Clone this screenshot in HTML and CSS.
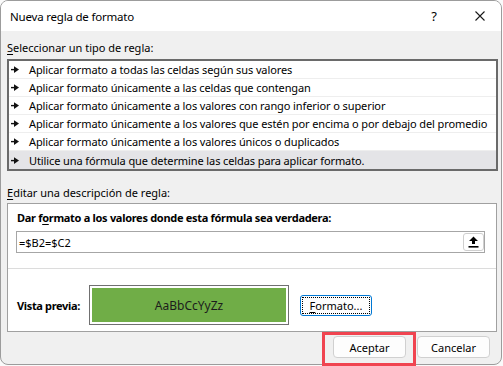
FILE: index.html
```html
<!DOCTYPE html>
<html lang="es">
<head>
  <meta charset="UTF-8" />
  <meta name="viewport" content="width=device-width, initial-scale=1.0"/>
  <title>Nueva regla de formato</title>
  <link rel="stylesheet" href="styles.css">
</head>
<body>
  <div class="dialog">
    <div class="titlebar">
      <span class="title">Nueva regla de formato</span>
      <span class="help">?</span>
      <span class="close">
        <svg width="10" height="10" viewBox="0 0 10 10"><path d="M0.5 0.5 L9.5 9.5 M9.5 0.5 L0.5 9.5" stroke="#1a1a1a" stroke-width="1.1" fill="none"/></svg>
      </span>
    </div>

    <div class="content">
      <div class="label"><u>S</u>eleccionar un tipo de regla:</div>
      <ul class="rule-list">
        <li><svg class="arrow" width="8" height="7" viewBox="0 0 8 7"><rect x="0" y="2.9" width="4" height="1.4"/><path d="M3 0.3 L8 3.6 L3 6.9 Z"/></svg>Aplicar formato a todas las celdas según sus valores</li>
        <li><svg class="arrow" width="8" height="7" viewBox="0 0 8 7"><rect x="0" y="2.9" width="4" height="1.4"/><path d="M3 0.3 L8 3.6 L3 6.9 Z"/></svg>Aplicar formato únicamente a las celdas que contengan</li>
        <li><svg class="arrow" width="8" height="7" viewBox="0 0 8 7"><rect x="0" y="2.9" width="4" height="1.4"/><path d="M3 0.3 L8 3.6 L3 6.9 Z"/></svg>Aplicar formato únicamente a los valores con rango inferior o superior</li>
        <li><svg class="arrow" width="8" height="7" viewBox="0 0 8 7"><rect x="0" y="2.9" width="4" height="1.4"/><path d="M3 0.3 L8 3.6 L3 6.9 Z"/></svg>Aplicar formato únicamente a los valores que estén por encima o por debajo del promedio</li>
        <li><svg class="arrow" width="8" height="7" viewBox="0 0 8 7"><rect x="0" y="2.9" width="4" height="1.4"/><path d="M3 0.3 L8 3.6 L3 6.9 Z"/></svg>Aplicar formato únicamente a los valores únicos o duplicados</li>
        <li class="selected"><svg class="arrow" width="8" height="7" viewBox="0 0 8 7"><rect x="0" y="2.9" width="4" height="1.4"/><path d="M3 0.3 L8 3.6 L3 6.9 Z"/></svg>Utilice una fórmula que determine las celdas para aplicar formato.</li>
      </ul>

      <div class="label label-edit"><u>E</u>ditar una descripción de regla:</div>
      <div class="panel">
        <div class="panel-top">
          <div class="panel-heading">Dar f<u>o</u>rmato a los valores donde esta fórmula sea verdadera:</div>
          <div class="formula">
            <span class="formula-text">=$B2=$C2</span>
            <button class="ref-btn">
              <svg width="11" height="12" viewBox="0 0 11 12"><path d="M5.5 0.5 L10 5 L7 5 L7 8 L4 8 L4 5 L1 5 Z" fill="#000"/><rect x="0.5" y="10" width="10" height="1.6" fill="#000"/></svg>
            </button>
          </div>
        </div>
        <div class="preview-row">
          <span class="preview-label">Vista previa:</span>
          <div class="preview-box"><div class="preview-sample">AaBbCcYyZz</div></div>
          <button class="format-btn"><span><u>F</u>ormato...</span></button>
        </div>
      </div>

      <div class="actions">
        <button class="btn">Aceptar</button>
        <button class="btn">Cancelar</button>
      </div>
    </div>
  </div>

  <!-- annotation around the OK button -->
  <div class="highlight"></div>
</body>
</html>
```

FILE: styles.css
```css
* {
  box-sizing: border-box;
}

body {
  margin: 0;
  width: 503px;
  height: 366px;
  overflow: hidden;
  position: relative;
  background: #fafafa;
  font-family: "Noto Sans", sans-serif;
  font-size: 11px;
  color: #000;
}

u {
  text-decoration: underline;
  text-underline-offset: 2px;
}

.dialog {
  width: 502px;
  height: 365px;
  border: 1px solid #9c9c9c;
  border-radius: 8px;
  overflow: hidden;
  background: #f0f0f0;
  display: flex;
  flex-direction: column;
}

.titlebar {
  height: 30px;
  flex: none;
  background: #fff;
  display: flex;
  align-items: center;
  padding-left: 9px;
  font-size: 11.5px;
}

.title {
  flex: 1;
  letter-spacing: -0.2px;
}

.help {
  width: 20px;
  text-align: center;
  font-size: 13px;
  margin-right: 31px;
}

.close {
  width: 10px;
  height: 10px;
  margin-right: 16px;
  display: flex;
}

.content {
  padding: 8px 3px 0 6px;
}

.label {
  line-height: 18px;
  height: 18px;
  margin-bottom: 2px;
}

.label-edit {
  margin-top: 13px;
  margin-bottom: 1px;
}

.rule-list {
  list-style: none;
  margin: 0;
  padding: 0;
  border: 2px solid #6a6a6a;
  background: #fff;
}

.rule-list li {
  height: 18px;
  border-bottom: 1px solid #eeeeee;
  display: flex;
  align-items: center;
  padding-left: 2px;
  white-space: nowrap;
  overflow: hidden;
  letter-spacing: -0.1px;
}

.rule-list li:last-child {
  border-bottom: none;
}

.rule-list li.selected {
  background: #e4e4e7;
}

.arrow {
  flex: none;
  margin-right: 10px;
  fill: #111;
}

.panel {
  height: 129px;
  margin-right: 1px;
  border: 1px solid #a0a0a0;
  background: #fff;
}

.panel-top {
  height: 64px;
  padding: 5px 0 0 8px;
}

.panel-heading {
  line-height: 18px;
  font-weight: bold;
  padding-left: 1px;
  letter-spacing: -0.3px;
}

.formula {
  margin-top: 4px;
  width: 469px;
  height: 22px;
  border: 1px solid #a6a6a6;
  display: flex;
  align-items: center;
  padding-left: 2px;
}

.formula-text {
  flex: 1;
}

.ref-btn {
  width: 21px;
  height: 18px;
  padding: 0;
  border: 1px solid #cfcfcf;
  border-radius: 3px;
  background: #fff;
  display: flex;
  align-items: center;
  justify-content: center;
}

.preview-row {
  height: 63px;
  border-top: 1px solid #dcdcdc;
  display: flex;
  align-items: center;
  padding: 10px 0 0 8px;
}

.preview-label {
  width: 73px;
  font-weight: bold;
  padding-left: 1px;
  letter-spacing: -0.35px;
}

.preview-box {
  width: 200px;
  height: 40px;
  border: 1px solid #707070;
  padding: 2px;
  background: #fff;
}

.preview-sample {
  height: 100%;
  background: #70ad47;
  display: flex;
  align-items: center;
  justify-content: center;
  font-size: 12px;
  color: #1c1c1c;
}

.format-btn {
  margin-left: 11px;
  width: 72px;
  height: 21px;
  padding: 1px;
  border: 1px solid #0078d4;
  border-radius: 3px;
  background: #fdfdfd;
  font-family: inherit;
  font-size: 11px;
  color: #000;
}

.format-btn span {
  display: flex;
  align-items: center;
  justify-content: center;
  height: 100%;
  border: 1px dotted #000;
}

.actions {
  display: flex;
  justify-content: flex-end;
  gap: 11px;
  margin-top: 4px;
  padding-right: 8px;
}

.btn {
  width: 73px;
  height: 22px;
  padding: 0;
  background: #fdfdfd;
  border: 1px solid #d0d0d0;
  border-radius: 4px;
  font-family: inherit;
  font-size: 11px;
  color: #000;
}

.highlight {
  position: absolute;
  left: 322px;
  top: 332px;
  width: 94px;
  height: 34px;
  border: 3px solid #f04450;
}
```
